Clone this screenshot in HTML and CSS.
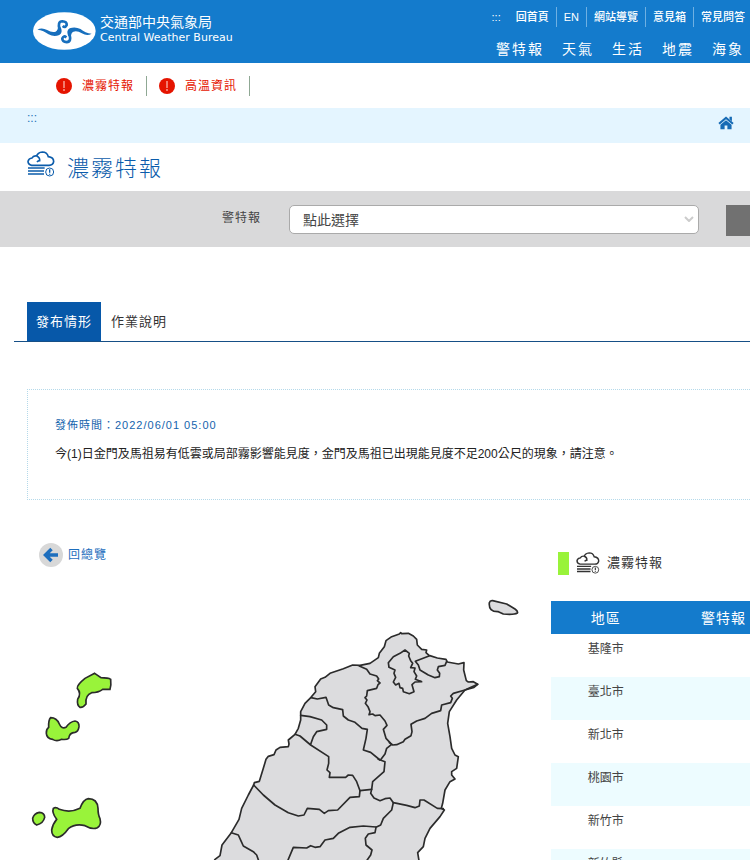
FILE: index.html
```html
<!DOCTYPE html>
<html lang="zh-Hant">
<head>
<meta charset="utf-8">
<meta name="viewport" content="width=device-width, initial-scale=1">
<title>濃霧特報</title>
<link rel="stylesheet" href="styles.css">
</head>
<body>
<svg class="defs" aria-hidden="true">
  <symbol id="fog" viewBox="0 0 84 78">
    <g fill="none" stroke="currentColor" stroke-width="5">
      <path d="M28 17Q32 4 46 3Q60 3 64 17Q80 19 80 32Q78 43 66 43H14Q3 41 3 31Q5 22 15 21Q19 13 29 15Q39 19 38 29Q33 29 30 33"/>
      <path d="M3 51H53M3 60H51M3 69H51"/>
      <circle cx="68" cy="63" r="12" stroke-width="3"/>
      <path d="M68 55V65M68 68V71" stroke-width="4"/>
    </g>
  </symbol>
  <symbol id="alert" viewBox="0 0 16 16">
    <circle cx="8" cy="8" r="8" fill="#e51400"/>
    <path d="M8 3V10M8 11V13" stroke="#ffe4dd" stroke-width="1"/>
  </symbol>
  <symbol id="swirl" viewBox="0 0 187 117">
    <path d="M13 52Q26 44 42 53Q56 62 67 58Q75 54 74 42L83 46Q89 61 78 68Q62 74 46 66Q32 54 13 52Z" fill="#176fbd"/>
    <path d="M79 50Q72 28 87 27Q101 28 100 38Q96 48 88 41" fill="none" stroke="#176fbd" stroke-width="8"/>
  </symbol>
</svg>

<header class="header">
  <a class="brand" href="#">
    <svg class="brand-logo" viewBox="0 0 187 112" aria-hidden="true">
      <ellipse cx="93" cy="56" rx="93" ry="56" fill="#fff"/>
      <use href="#swirl" width="187" height="117"/>
      <use href="#swirl" width="187" height="117" transform="rotate(180 93.500 58)"/>
    </svg>
    <span class="brand-text"><span class="brand-zh">交通部中央氣象局</span><span class="brand-en">Central Weather Bureau</span></span>
  </a>
  <div class="menus">
    <nav class="top-links" aria-label="網站連結">
      <a href="#" class="access">:::</a><a href="#">回首頁</a><a href="#">EN</a><a href="#">網站導覽</a><a href="#">意見箱</a><a href="#">常見問答</a>
    </nav>
    <nav class="main-nav" aria-label="主選單">
      <a href="#">警特報</a><a href="#">天氣</a><a href="#">生活</a><a href="#">地震</a><a href="#">海象</a>
    </nav>
  </div>
</header>

<div class="alerts">
  <a href="#"><svg aria-hidden="true"><use href="#alert"/></svg>濃霧特報</a>
  <a href="#"><svg aria-hidden="true"><use href="#alert"/></svg>高溫資訊</a>
</div>

<div class="crumbs">
  <a href="#" class="access">:::</a>
  <a href="#" class="home" aria-label="首頁"><svg viewBox="0 0 46 40" aria-hidden="true"><path d="M23 1L45 20L41 24L23 9L5 24L1 20Z" /><path d="M33 2H40V15L33 9Z"/><path d="M23 12L39 25V38H27V27H19V38H7V25Z"/></svg></a>
</div>

<main>
  <h1 class="title"><svg aria-hidden="true"><use href="#fog"/></svg>濃霧特報</h1>

  <form class="filter">
    <label for="warning">警特報</label>
    <div class="select-wrap">
      <select id="warning"><option>點此選擇</option></select>
      <svg viewBox="0 0 10 6" aria-hidden="true"><path d="M1 1L5 5L9 1"/></svg>
    </div>
    <button type="button" aria-label="送出"></button>
  </form>

  <div class="tabs" role="tablist">
    <button type="button" role="tab" aria-selected="true" class="tab active">發布情形</button>
    <button type="button" role="tab" aria-selected="false" class="tab">作業說明</button>
  </div>

  <section class="notice">
    <p class="issued">發佈時間：2022/06/01 05:00</p>
    <p class="message">今(1)日金門及馬祖易有低雲或局部霧影響能見度，金門及馬祖已出現能見度不足200公尺的現象，請注意。</p>
  </section>

  <div class="content">
    <section class="map-panel">
      <a class="back" href="#"><svg viewBox="0 0 24 24" aria-hidden="true"><circle cx="12" cy="12" r="12" fill="#d8d8d8"/><path d="M12.500 6L6.500 12L12.500 18M7 12H19" fill="none" stroke="#1d6ebd" stroke-width="3.500"/></svg>回總覽</a>
      <svg class="map" viewBox="0 0 1539 810" role="img" aria-label="臺灣地圖">
        <g class="fog-area" transform="translate(-21 -180)">
          <path d="M224 430L243 443Q265 443 272 448Q274 465 270 478L248 478Q235 488 215 488Q195 495 198 522Q190 533 180 532Q170 525 173 508Q185 490 172 475Q170 465 195 445Z"/>
          <path d="M92 563Q110 563 118 582Q125 598 138 592Q150 575 165 573Q178 575 177 590Q175 605 165 607Q148 608 146 625Q140 630 125 628Q110 636 98 628Q80 626 79 610Q78 598 86 592Q85 570 92 563Z"/>
          <path d="M58 847Q74 848 74 862Q70 880 50 885Q38 880 38 865Q42 850 58 847Z"/>
          <path d="M100 835Q108 830 118 838Q150 850 180 835Q190 808 205 806Q232 806 234 835Q234 855 240 866Q245 885 232 893Q218 900 195 887Q165 880 145 896Q128 920 112 922Q95 920 95 900Q98 882 110 868Q95 848 100 835Z"/>
        </g>
        <path class="land" transform="translate(519 0)" d="M40 818L45 808L60 797L66 765L94 728L117 688L125 655L145 615L161 585L163 578L178 574L190 535L198 508L205 499L222 494L228 480L240 472L265 470L267 462L265 450L285 433L295 415L302 390L302 365L315 340L333 322L347 305L345 290L362 267L375 262L390 250L430 236L458 225L480 226L510 220L535 203L538 190L553 170L558 152L575 140L598 132L602 128L605 131L625 130L640 138L650 148L652 165L665 178L680 180L678 188L687 196L712 204L738 208L742 216L775 222L792 218L791 240L799 272L805 276L820 275L833 283L822 292L795 300L770 330L748 365L743 400L750 440L755 475L765 495L775 500L770 535L755 545L755 555L765 567L750 575L735 600L728 640L724 655L733 660L720 680L690 715L675 745L670 770L653 788L658 818Z"/>
        <g class="border" transform="translate(519 0)">
          <path d="M333 323L352 327L378 322L386 345L400 353L428 359L430 378L445 390L465 397L486 415L502 418L498 445L490 480L512 487L540 510"/>
          <path d="M302 376L330 380L365 390L380 405L380 418L350 425L340 440L332 463"/>
          <path d="M285 433L300 438L332 465L386 500L386 520L381 540L390 548L388 562L437 562L445 555L458 556L470 575L480 602L478 620L450 622L413 660L385 662L373 670L358 658L322 655L312 675L295 678L265 668L225 645L190 615L161 585"/>
          <path d="M480 602L515 598M528 711L490 708L450 712L415 730L400 745L375 750L360 770L345 772L332 767L320 774L280 772L262 815"/>
          <path d="M94 728L115 735L124 755L130 768L160 785L170 795L177 815"/>
        </g>
        <g class="border" transform="translate(969 0)">
          <path d="M28 228L50 238L60 252L80 258L86 267L82 272L90 279L84 284L80 295L52 302L50 318L45 323L51 330L46 340L54 350L60 365L57 374L68 372L75 377L90 375L105 393L111 406L100 418L108 445L125 463L110 475L105 492L93 508"/>
          <path d="M118 458L128 465L140 464L160 455L165 448L183 437L186 425L183 403L200 393L225 385L245 370L272 362L275 345L302 338L307 325L302 318L310 310L345 300L358 294L383 283"/>
          <path d="M85 508L105 515L102 545L68 575L65 598L62 610L72 624L90 632L105 626L120 624L130 638L170 646L195 653L208 648L210 630L222 630L262 655L280 656"/>
          <path d="M130 638L125 660L100 685L92 705L78 712L75 728L55 732L46 745L48 765L66 780L62 795L48 815"/>
          <path d="M165 180L178 190L176 198L182 212L188 220L182 233L195 234L192 245L200 258L196 268L215 275L195 276L186 284L192 305L178 311L160 305L158 295L150 293L147 280L137 285L130 276L137 262L132 250L135 240L117 232L115 218L130 200L150 190Z"/>
          <path d="M237 198L196 214L205 225L210 240L235 255L255 263L268 260L269 250L262 240L265 230L285 226L290 214"/>
          <path class="land" d="M418 38Q420 31 428 32L470 42L495 57Q505 64 502 69Q492 75 460 72L445 65Q415 66 418 38Z"/>
        </g>
      </svg>
    </section>

    <section class="list-panel">
      <div class="legend"><span class="swatch"></span><svg aria-hidden="true"><use href="#fog"/></svg>濃霧特報</div>
      <table>
        <thead><tr><th scope="col">地區</th><th scope="col">警特報</th></tr></thead>
        <tbody>
          <tr><td>基隆市</td><td></td></tr>
          <tr><td>臺北市</td><td></td></tr>
          <tr><td>新北市</td><td></td></tr>
          <tr><td>桃園市</td><td></td></tr>
          <tr><td>新竹市</td><td></td></tr>
          <tr><td>新竹縣</td><td></td></tr>
        </tbody>
      </table>
    </section>
  </div>
</main>
</body>
</html>
```
FILE: styles.css
```css
* { box-sizing: border-box; }

body {
  margin: 0;
  height: 100vh;
  overflow: hidden;
  background: #fff;
  color: #333;
  font: 12px/20px "Liberation Sans", "Noto Sans CJK TC", sans-serif;
}

a { color: inherit; text-decoration: none; }
p, h1 { margin: 0; font-weight: 400; }
svg { display: block; flex: none; }
.defs { position: absolute; width: 0; height: 0; }

.header {
  display: flex;
  justify-content: space-between;
  height: 63px;
  background: #147bcc;
  color: #fff;
}
.brand { display: flex; gap: 4px; padding: 12px 0 0 33px; }
.brand-logo { width: 63px; height: 38px; }
.brand-text { display: flex; flex-direction: column; padding-top: 2px; line-height: 16px; }
.brand-zh { font-size: 14px; }
.brand-en { font: 11px/16px "DejaVu Sans", sans-serif; }

.menus { display: flex; flex-direction: column; align-items: flex-end; gap: 12px; padding-top: 7px; }
.top-links { display: flex; font-size: 11px; font-weight: 500; padding-right: 5px; }
.top-links a { padding: 0 7px; border-left: 1px solid #6fb0e2; }
.top-links a:nth-child(-n+2) { border-left-color: transparent; }
.top-links a:last-child { padding-right: 0; }
.main-nav { display: flex; gap: 18px; padding-right: 6px; font-size: 14px; letter-spacing: 2px; }

.alerts { display: flex; gap: 12px; padding: 13px 0 12px 56px; color: #e51400; letter-spacing: 1px; }
.alerts a { display: flex; align-items: center; gap: 10px; padding-right: 12px; border-right: 1px solid #8fa894; }
.alerts svg { width: 16px; height: 16px; }

.crumbs { display: flex; justify-content: space-between; height: 35px; padding: 0 16px 0 27px; background: #e4f5ff; color: #2573b8; }
.home { padding-top: 8px; }
.home svg { width: 16px; height: 14px; fill: #176bb5; }

.title { display: flex; gap: 12px; height: 48px; padding: 8px 0 0 27px; color: #0b5cab; font-size: 22px; font-weight: 300; line-height: 36px; letter-spacing: 2px; }
.title svg { width: 28px; height: 26px; }

.filter { display: flex; height: 56px; padding: 14px 0 0 222px; background: #d9d9da; color: #444; }
.filter label { width: 67px; line-height: 27px; letter-spacing: 1px; }
.select-wrap { position: relative; flex: 1; }
.filter select {
  width: 100%;
  height: 29px;
  padding: 0 13px;
  appearance: none;
  border: 1px solid #aaa;
  border-radius: 5px;
  background: #fff;
  color: #444;
  font: inherit;
  font-size: 14px;
}
.select-wrap svg { position: absolute; right: 5px; top: 11px; width: 10px; height: 6px; fill: none; stroke: #ccc; stroke-width: 2; pointer-events: none; }
.filter button { width: 24px; height: 31px; margin-left: 27px; padding: 0; border: 0; background: #717171; }

.tabs { display: flex; gap: 1px; margin: 55px 0 0 14px; padding-left: 13px; border-bottom: 1px solid #164f86; }
.tab { height: 39px; padding: 0 9px; border: 0; background: none; color: #333; font: inherit; font-size: 13px; letter-spacing: 1px; }
.tab.active { background: #0758a9; color: #fff; }

.notice { height: 111px; margin: 47px 0 0 27px; padding: 25px 27px; border: 1px dotted #b4d9ea; border-right: 0; }
.issued { margin-bottom: 9px; color: #1463ad; font-size: 11px; letter-spacing: 1px; }
.message { color: #222; white-space: nowrap; }

.content { display: flex; align-items: flex-start; padding-left: 27px; }
.map-panel { flex: 1; padding: 43px 11px 0 0; }
.back { display: flex; align-items: center; gap: 5px; padding-left: 12px; color: #1d6ebd; letter-spacing: 1px; }
.back svg { width: 24px; height: 24px; }
.map { width: 100%; margin-top: 23px; }
.fog-area path { fill: #99f33a; stroke: #2b2b2b; stroke-width: 5; }
.land { fill: #dcdcde; }
.land, .border { stroke: #2b2b2b; stroke-width: 5; stroke-linejoin: round; stroke-linecap: round; }
.border path:not(.land) { fill: none; }

.list-panel { width: 199px; padding-top: 51px; }
.legend { display: flex; align-items: center; gap: 7px; height: 24px; padding-left: 7px; font-size: 13px; letter-spacing: 1px; }
.legend svg { width: 24px; height: 22px; }
.swatch { width: 11px; height: 23px; background: #99f33a; }

table { width: 100%; margin-top: 26px; border-collapse: collapse; table-layout: fixed; }
th { height: 33px; padding: 0 4px 0 0; background: #147bcc; color: #fff; font-size: 14px; font-weight: 400; letter-spacing: 1px; text-align: right; }
th:first-child { width: 55%; padding: 0; text-align: center; }
td { height: 43px; padding: 5px 0 0; color: #444; text-align: center; vertical-align: top; }
tbody tr:nth-child(even) { background: #edfcff; }
```
